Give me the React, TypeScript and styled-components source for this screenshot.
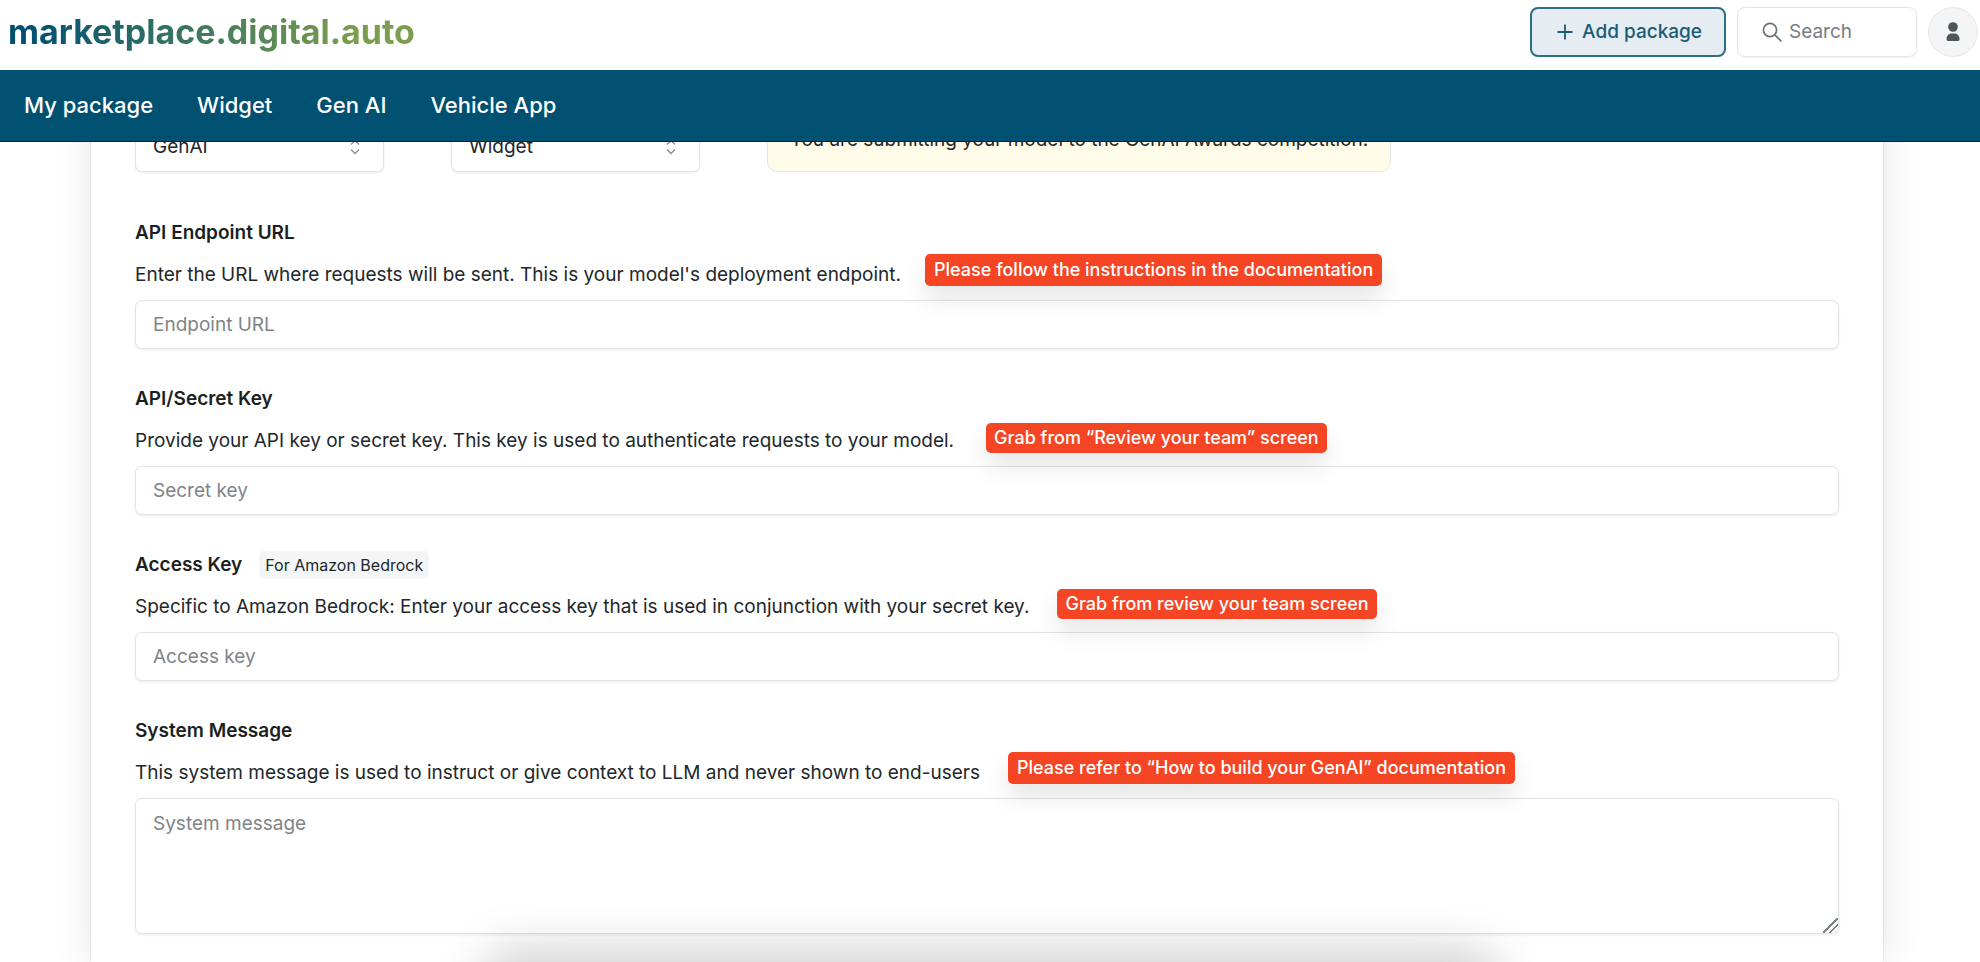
import React from 'react';
import styled, { createGlobalStyle } from 'styled-components';

const GlobalStyle = createGlobalStyle`
  *, *::before, *::after { box-sizing: border-box; }
  body {
    margin: 0;
    background: #fff;
    color: #22272a;
    font-family: Inter, "Liberation Sans", sans-serif;
    font-size: 19px;
    line-height: 24px;
  }
  button, input, select, textarea { font: inherit; color: inherit; }
`;

const Page = styled.div`
  height: 100vh;
  display: flex;
  flex-direction: column;
  overflow: hidden;
`;

const TopBar = styled.header`
  position: relative;
  z-index: 3;
  flex: none;
  display: flex;
  align-items: flex-start;
  justify-content: space-between;
  height: 70px;
  padding: 7px 2px 0 8px;
  background: #fff;
`;

const Logo = styled.a`
  font-size: 34px;
  font-weight: 700;
  line-height: 50px;
  text-decoration: none;
  color: transparent;
  background: linear-gradient(90deg, #005072 5%, #7b9d4d 85%);
  background-clip: text;
  -webkit-background-clip: text;
`;

const Actions = styled.div`
  display: flex;
  gap: 11px;
`;

const AddButton = styled.button`
  display: flex;
  align-items: center;
  gap: 9px;
  height: 50px;
  padding: 0 22px 0 25px;
  border: 2px solid #2b6f86;
  border-radius: 8px;
  background: #e5edf2;
  color: #1a5b73;
  font-weight: 500;
  cursor: pointer;
`;

const SearchBox = styled.label`
  display: flex;
  align-items: center;
  gap: 7px;
  width: 180px;
  height: 50px;
  padding: 0 24px;
  border: 1px solid #e4e7e9;
  border-radius: 8px;
  box-shadow: 0 1px 2px rgba(0, 0, 0, 0.06);
  color: #6c7275;
`;

const SearchInput = styled.input`
  flex: 1;
  min-width: 0;
  padding: 0;
  border: 0;
  outline: 0;
  background: transparent;
  &::placeholder { color: #777d80; opacity: 1; }
`;

const Avatar = styled.button`
  display: grid;
  place-items: center;
  width: 50px;
  height: 50px;
  padding: 0;
  border: 1px solid #e4e7e9;
  border-radius: 50%;
  background: #f4f5f6;
  color: #4c5559;
  cursor: pointer;
`;

const Nav = styled.nav`
  position: relative;
  z-index: 2;
  flex: none;
  display: flex;
  align-items: center;
  gap: 44px;
  height: 72px;
  padding: 0 24px 2px;
  border-bottom: 1px solid #07212d;
  background: #005072;
`;

const NavLink = styled.a`
  color: #fff;
  font-size: 22px;
  font-weight: 500;
  text-decoration: none;
`;

const Card = styled.main`
  flex: 1 0 auto;
  margin: -34px 97px 0 91px;
  padding: 0 44px;
  background: #fff;
  box-shadow: 0 0 2px rgba(0, 0, 0, 0.16), 0 0 38px rgba(0, 0, 0, 0.11);
`;

const ChoiceRow = styled.div`
  display: flex;
  align-items: flex-end;
  gap: 67px;
  height: 64px;
  margin-bottom: 49px;
`;

const SelectBox = styled.div`
  display: grid;
  align-items: center;
  width: 249px;
  height: 50px;
`;

const Select = styled.select`
  grid-area: 1 / 1;
  width: 100%;
  height: 100%;
  padding: 0 17px;
  border: 1px solid #e2e5e7;
  border-radius: 7px;
  background: #fff;
  box-shadow: 0 1px 3px rgba(0, 0, 0, 0.08);
  appearance: none;
`;

const ChevronIcon = styled.svg`
  grid-area: 1 / 1;
  justify-self: end;
  margin-right: 24px;
  color: #8b9194;
  pointer-events: none;
`;

const Notice = styled.p`
  height: 64px;
  margin: 0;
  padding: 19px 22px;
  border: 1px solid #e3e6e6;
  border-radius: 10px;
  background: #fffde9;
  white-space: nowrap;
`;

const Form = styled.form`
  display: flex;
  flex-direction: column;
  gap: 38px;
`;

const FieldGroup = styled.div`
  display: flex;
  flex-direction: column;
`;

const LabelRow = styled.div`
  display: flex;
  align-items: center;
  gap: 17px;
  height: 24px;
  margin-bottom: 18px;
`;

const Label = styled.label`
  color: #1b1f21;
  font-weight: 600;
`;

const Provider = styled.span`
  padding: 2px 6px;
  border-radius: 5px;
  background: #f4f5f7;
  font-size: 16px;
`;

const HelpRow = styled.div`
  position: relative;
  z-index: 1;
  display: flex;
  align-items: center;
  height: 24px;
  margin-bottom: 13px;
  white-space: nowrap;
`;

const Help = styled.p`
  margin: 0;
`;

const Callout = styled.span<{ $gap: number; $tall?: boolean }>`
  margin: 0 0 ${(p) => (p.$tall ? 10 : 7)}px ${(p) => p.$gap}px;
  padding: ${(p) => (p.$tall ? '4px 9px' : '3px 8px')};
  border-radius: 5px;
  background: #f54524;
  box-shadow: 0 13px 24px rgba(0, 0, 0, 0.1);
  color: #fff;
  font-size: 18px;
  font-weight: 500;
`;

const Input = styled.input`
  width: 100%;
  height: 49px;
  padding: 0 17px;
  border: 1px solid #e2e5e7;
  border-radius: 7px;
  background: #fff;
  box-shadow: 0 1px 3px rgba(0, 0, 0, 0.09);
  &::placeholder { color: #7f8487; opacity: 1; }
`;

const TextArea = styled(Input).attrs({ as: 'textarea' })`
  height: 136px;
  padding: 13px 17px;
  resize: vertical;
  &::-webkit-resizer {
    background: linear-gradient(
      135deg,
      transparent 46%,
      #7d8285 46% 54%,
      transparent 54% 68%,
      #7d8285 68% 76%,
      transparent 76%
    );
  }
`;

const BottomSheet = styled.div`
  position: fixed;
  z-index: 2;
  top: 100vh;
  left: 25%;
  right: 25%;
  height: 80px;
  border-radius: 16px;
  box-shadow: 0 0 50px 12px rgba(0, 0, 0, 0.19);
`;

type Field = {
  id: string;
  label: string;
  provider?: string;
  help: string;
  callout: string;
  gap: number;
  tall?: boolean;
  placeholder: string;
  multiline?: boolean;
};

const fields: Field[] = [
  {
    id: 'endpoint',
    label: 'API Endpoint URL',
    help: "Enter the URL where requests will be sent. This is your model's deployment endpoint.",
    callout: 'Please follow the instructions in the documentation',
    gap: 24,
    tall: true,
    placeholder: 'Endpoint URL',
  },
  {
    id: 'secret',
    label: 'API/Secret Key',
    help: 'Provide your API key or secret key. This key is used to authenticate requests to your model.',
    callout: 'Grab from “Review your team” screen',
    gap: 32,
    placeholder: 'Secret key',
  },
  {
    id: 'access',
    label: 'Access Key',
    provider: 'For Amazon Bedrock',
    help: 'Specific to Amazon Bedrock: Enter your access key that is used in conjunction with your secret key.',
    callout: 'Grab from review your team screen',
    gap: 28,
    placeholder: 'Access key',
  },
  {
    id: 'system',
    label: 'System Message',
    help: 'This system message is used to instruct or give context to LLM and never shown to end-users',
    callout: 'Please refer to “How to build your GenAI” documentation',
    gap: 28,
    tall: true,
    placeholder: 'System message',
    multiline: true,
  },
];

const navItems = ['My package', 'Widget', 'Gen AI', 'Vehicle App'];

const PlusIcon = () => (
  <svg width="16" height="16" viewBox="0 0 16 16" fill="none" stroke="currentColor" strokeWidth="1.8" aria-hidden="true">
    <path d="M8 .5v15M.5 8h15" />
  </svg>
);

const SearchIcon = () => (
  <svg width="20" height="20" viewBox="0 0 20 20" fill="none" stroke="currentColor" strokeWidth="1.7" strokeLinecap="round" aria-hidden="true">
    <circle cx="8" cy="8" r="6.6" />
    <path d="M12.8 12.8l6 6" />
  </svg>
);

const UserIcon = () => (
  <svg width="16" height="20" viewBox="0 0 16 20" fill="currentColor" aria-hidden="true">
    <circle cx="8" cy="5" r="4.8" />
    <path d="M1.5 17.3C1.5 14 3.6 11.6 6.5 11.6h3c2.9 0 5 2.4 5 5.7 0 1-.5 1.6-1.5 1.6H3c-1 0-1.5-.6-1.5-1.6z" />
  </svg>
);

const Chevrons = () => (
  <ChevronIcon width="10" height="16" viewBox="0 0 10 16" fill="none" stroke="currentColor" strokeWidth="1.4" aria-hidden="true">
    <path d="M1 5.500l4-4 4 4M1 10.500l4 4 4-4" />
  </ChevronIcon>
);

const Choice = ({ name, value }: { name: string; value: string }) => (
  <SelectBox>
    <Select aria-label={name} defaultValue={value}>
      <option>{value}</option>
    </Select>
    <Chevrons />
  </SelectBox>
);

export default function App() {
  return (
    <Page>
      <GlobalStyle />
      <TopBar>
        <Logo href="#">marketplace.digital.auto</Logo>
        <Actions>
          <AddButton type="button">
            <PlusIcon />
            Add package
          </AddButton>
          <SearchBox>
            <SearchIcon />
            <SearchInput type="search" placeholder="Search" aria-label="Search" />
          </SearchBox>
          <Avatar type="button" aria-label="Account">
            <UserIcon />
          </Avatar>
        </Actions>
      </TopBar>
      <Nav>
        {navItems.map((item) => (
          <NavLink key={item} href="#">
            {item}
          </NavLink>
        ))}
      </Nav>
      <Card>
        <ChoiceRow>
          <Choice name="Category" value="GenAI" />
          <Choice name="Type" value="Widget" />
          <Notice>You are submitting your model to the GenAI Awards competition.</Notice>
        </ChoiceRow>
        <Form>
          {fields.map((f) => (
            <FieldGroup key={f.id}>
              <LabelRow>
                <Label htmlFor={f.id}>{f.label}</Label>
                {f.provider && <Provider>{f.provider}</Provider>}
              </LabelRow>
              <HelpRow>
                <Help>{f.help}</Help>
                <Callout $gap={f.gap} $tall={f.tall}>
                  {f.callout}
                </Callout>
              </HelpRow>
              {f.multiline ? (
                <TextArea id={f.id} placeholder={f.placeholder} />
              ) : (
                <Input id={f.id} placeholder={f.placeholder} />
              )}
            </FieldGroup>
          ))}
        </Form>
      </Card>
      <BottomSheet />
    </Page>
  );
}
